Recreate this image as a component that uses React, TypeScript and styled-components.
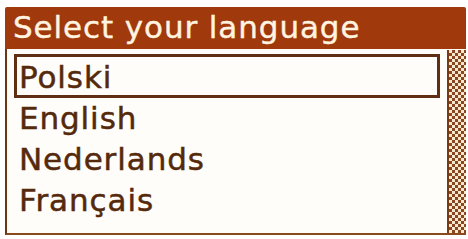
import React from "react";
import styled, { createGlobalStyle } from "styled-components";

const languages = ["Polski", "English", "Nederlands", "Français"];

const App = () => {
  return (
    <>
      <Global />
      <Frame>
        <Header>Select your language</Header>
        <Body>
          <List>
            {languages.map((lang, index) => (
              <Item key={lang} selected={index === 0}>
                {lang}
              </Item>
            ))}
          </List>
          <Scrollbar />
        </Body>
      </Frame>
    </>
  );
};

const Global = createGlobalStyle`
  html, body {
    margin: 0;
    padding: 0;
    background: #ffffff;
  }
  body {
    width: 468px;
    height: 239px;
    overflow: hidden;
  }
`;

const Frame = styled.div`
  display: flex;
  flex-direction: column;
  margin: 7px 2px 0 5px;
  width: 461px;
  height: 228px;
  font-family: "DejaVu Sans", "Liberation Sans", sans-serif;
`;

const Header = styled.div`
  height: 42px;
  flex-shrink: 0;
  display: flex;
  align-items: center;
  padding: 0 0 1px 8px;
  box-sizing: border-box;
  background-color: #a0390b;
  border-radius: 2px 2px 0 0;
  color: #fff4e0;
  font-size: 31px;
  font-weight: 500;
  letter-spacing: 0.9px;
  line-height: 1;
  -webkit-text-stroke: 0.4px #fff4e0;
`;

const Body = styled.div`
  flex: 1;
  display: flex;
  flex-direction: row;
  border-left: 2px solid #6e3514;
  border-bottom: 2px solid #8a4a1e;
  background-color: #fffdf9;
  min-height: 0;
`;

const List = styled.div`
  flex: 1;
  display: flex;
  flex-direction: column;
  padding: 5px 7px 0 7px;
`;

const Item = styled.div<{ selected?: boolean }>`
  height: 41px;
  flex-shrink: 0;
  display: flex;
  align-items: center;
  box-sizing: border-box;
  padding-left: ${(p) => (p.selected ? "2px" : "5px")};
  padding-top: 2px;
  border: ${(p) => (p.selected ? "3px solid #5e2f12" : "none")};
  ${(p) => p.selected && "height: 44px; margin-bottom: -1px;"}
  color: #55290c;
  font-size: 31px;
  letter-spacing: 0.9px;
  line-height: 1;
  -webkit-text-stroke: 0.5px #55290c;
`;

const Scrollbar = styled.div`
  width: 17px;
  margin-top: 1px;
  border-left: 2px solid #7a3a14;
  background-color: #f3e4c4;
  background-image: repeating-conic-gradient(
    #8a4620 0% 25%,
    #f6e8cc 0% 50%
  );
  background-size: 6px 6px;
`;

export default App;
